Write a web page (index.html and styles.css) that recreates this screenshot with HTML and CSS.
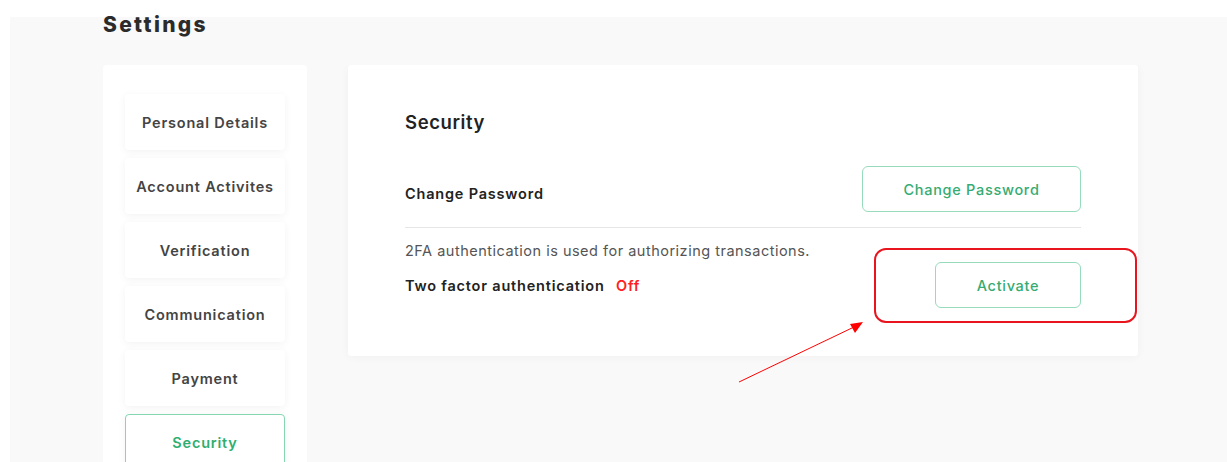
FILE: index.html
```html
<!DOCTYPE html>
<html lang="en">
<head>
    <meta charset="UTF-8">
    <title>Settings</title>
    <link rel="stylesheet" href="styles.css">
</head>
<body>
<div class="page">
    <h3 class="title">Settings</h3>
    <div class="layout">
        <ul class="menu">
            <li>Personal Details</li>
            <li>Account Activites</li>
            <li>Verification</li>
            <li>Communication</li>
            <li>Payment</li>
            <li class="active">Security</li>
        </ul>
        <div class="card">
            <h4 class="card-title">Security</h4>
            <div class="row row-line">
                <span class="label">Change Password</span>
                <button class="btn btn-wide">Change Password</button>
            </div>
            <div class="row">
                <div>
                    <p class="note">2FA authentication is used for authorizing transactions.</p>
                    <p class="label">Two factor authentication <span class="off">Off</span></p>
                </div>
                <button class="btn">Activate</button>
            </div>
        </div>
    </div>
    <div class="mark"></div>
    <svg class="arrow" width="140" height="70" viewBox="0 0 140 70">
        <line x1="1" y1="67" x2="116" y2="12" stroke="#ff0000" stroke-width="1"/>
        <polygon points="125,7 112,9 117,18" fill="#ff0000"/>
    </svg>
</div>
</body>
</html>
```

FILE: styles.css
```css
* {
    padding: 0;
    margin: 0;
    box-sizing: border-box;
}

body {
    background: #fff;
    font-family: Inter, "Liberation Sans", sans-serif;
    color: #222;
    overflow: hidden;
}

li {
    list-style: none;
}

.page {
    position: relative;
    margin: 17px 0 0 10px;
    height: 445px;
    background: #f9f9f9;
    padding-left: 93px;
}

.title {
    font-size: 21px;
    font-weight: 800;
    line-height: 15px;
    letter-spacing: 2.3px;
    color: #2b2b2b;
    height: 48px;
}

.layout {
    display: flex;
    align-items: flex-start;
    height: 397px;
    overflow: hidden;
}

.menu {
    width: 204px;
    height: 420px;
    background: #fff;
    border-radius: 4px;
    padding: 29px 0 0 22px;
}

.menu li {
    width: 160px;
    height: 56px;
    margin-bottom: 8px;
    background: #fff;
    border-radius: 4px;
    box-shadow: 0 2px 8px rgba(0, 0, 0, 0.05);
    display: flex;
    align-items: center;
    justify-content: center;
    font-size: 14.5px;
    font-weight: 600;
    letter-spacing: 0.8px;
    color: #444;
}

.menu li.active {
    border: 1px solid #86d6b2;
    color: #2fae6f;
}

.card {
    width: 790px;
    height: 291px;
    margin-left: 41px;
    background: #fff;
    border-radius: 3px;
    box-shadow: 0 1px 10px rgba(0, 0, 0, 0.04);
    padding: 45px 57px 0 57px;
}

.card-title {
    font-size: 18.5px;
    font-weight: 600;
    letter-spacing: 0.6px;
    color: #222;
    line-height: 24px;
    height: 56px;
}

.row {
    display: flex;
    justify-content: space-between;
    align-items: flex-start;
}

.row-line {
    height: 62px;
    border-bottom: 1px solid #e6e6e6;
}

.row-line .label {
    padding-top: 19px;
}

.label {
    font-size: 14.5px;
    font-weight: 600;
    letter-spacing: 0.8px;
    color: #222;
}

.note {
    font-size: 14.5px;
    letter-spacing: 0.5px;
    color: #555;
    margin-top: 14px;
    margin-bottom: 18px;
}

.off {
    color: #ff1f1f;
    margin-left: 7px;
}

.btn {
    width: 146px;
    height: 46px;
    background: #fff;
    border: 1px solid #96dcbc;
    border-radius: 6px;
    font-family: inherit;
    font-size: 14.5px;
    font-weight: 500;
    letter-spacing: 0.7px;
    color: #36ab72;
    margin-top: 34px;
}

.btn-wide {
    width: 219px;
    margin-top: 0;
}

.mark {
    position: absolute;
    left: 864px;
    top: 231px;
    width: 263px;
    height: 75px;
    border: 2px solid #e8141e;
    border-radius: 12px;
}

.arrow {
    position: absolute;
    left: 728px;
    top: 298px;
}
```
